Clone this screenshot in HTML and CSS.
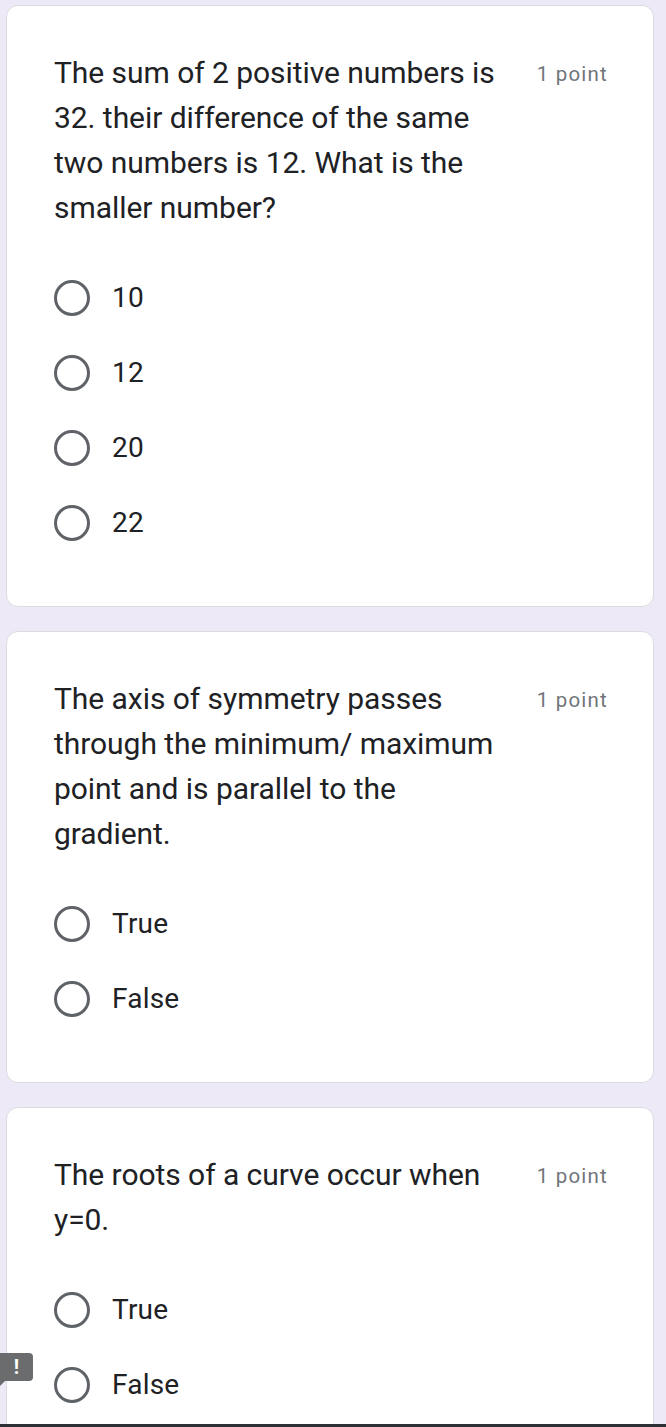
FILE: index.html
```html
<!DOCTYPE html>
<html>
<head>
<meta charset="utf-8">
<link rel="stylesheet" href="styles.css">
</head>
<body>
<div class="page">
  <section class="card">
    <div class="head">
      <div class="question">The sum of 2 positive numbers is 32. their difference of the same two numbers is 12. What is the smaller number?</div>
      <div class="points">1 point</div>
    </div>
    <div class="options">
      <div class="option"><span class="radio"></span><span class="label">10</span></div>
      <div class="option"><span class="radio"></span><span class="label">12</span></div>
      <div class="option"><span class="radio"></span><span class="label">20</span></div>
      <div class="option"><span class="radio"></span><span class="label">22</span></div>
    </div>
  </section>
  <section class="card">
    <div class="head">
      <div class="question">The axis of symmetry passes through the minimum/ maximum point and is parallel to the gradient.</div>
      <div class="points">1 point</div>
    </div>
    <div class="options">
      <div class="option"><span class="radio"></span><span class="label">True</span></div>
      <div class="option"><span class="radio"></span><span class="label">False</span></div>
    </div>
  </section>
  <section class="card last">
    <div class="head">
      <div class="question">The roots of a curve occur when y=0.</div>
      <div class="points">1 point</div>
    </div>
    <div class="options">
      <div class="option"><span class="radio"></span><span class="label">True</span></div>
      <div class="option"><span class="radio"></span><span class="label">False</span></div>
    </div>
  </section>
</div>
<div class="badge">!</div>
<div class="bottombar"></div>
</body>
</html>
```
FILE: styles.css
```css
html, body {
  margin: 0;
  padding: 0;
}
body {
  background: #ede9f7;
  font-family: Roboto, "Noto Sans", sans-serif;
  color: #202124;
  height: 1427px;
  overflow: hidden;
  position: relative;
}
.page {
  display: flex;
  flex-direction: column;
  gap: 24px;
  padding: 5px 12px 0 6px;
}
.card {
  background: #fff;
  border: 1px solid #dadce0;
  border-radius: 12px;
  padding: 46px 46px 46px 47px;
}
.card.last {
  padding-bottom: 60px;
}
.head {
  display: flex;
  justify-content: space-between;
  align-items: flex-start;
}
.question {
  width: 462px;
  margin-top: -2px;
  font-size: 30px;
  letter-spacing: -0.05px;
  line-height: 45px;
}
.points {
  font-size: 20.5px;
  letter-spacing: 1.2px;
  line-height: 45px;
  color: #70757a;
  white-space: nowrap;
  margin-right: -1px;
}
.options {
  display: flex;
  flex-direction: column;
  margin-top: 30px;
}
.option {
  display: flex;
  align-items: center;
  height: 75px;
}
.radio {
  width: 30px;
  height: 30px;
  border: 3px solid #5f6368;
  border-radius: 50%;
  flex: none;
}
.label {
  margin-left: 22px;
  font-size: 28px;
  letter-spacing: 0.2px;
}
.badge {
  position: absolute;
  left: 0;
  top: 1353px;
  width: 33px;
  height: 28px;
  background: #6b6c6e;
  border-radius: 0 4px 4px 0;
  color: #fff;
  font-weight: bold;
  font-size: 20px;
  line-height: 28px;
  text-align: center;
}
.badge::after {
  content: "";
  position: absolute;
  left: 0;
  bottom: -5px;
  border-top: 5px solid #6b6c6e;
  border-right: 5px solid transparent;
}
.bottombar {
  position: absolute;
  left: 0;
  right: 0;
  bottom: 0;
  height: 3px;
  background: #2d3136;
}
```
